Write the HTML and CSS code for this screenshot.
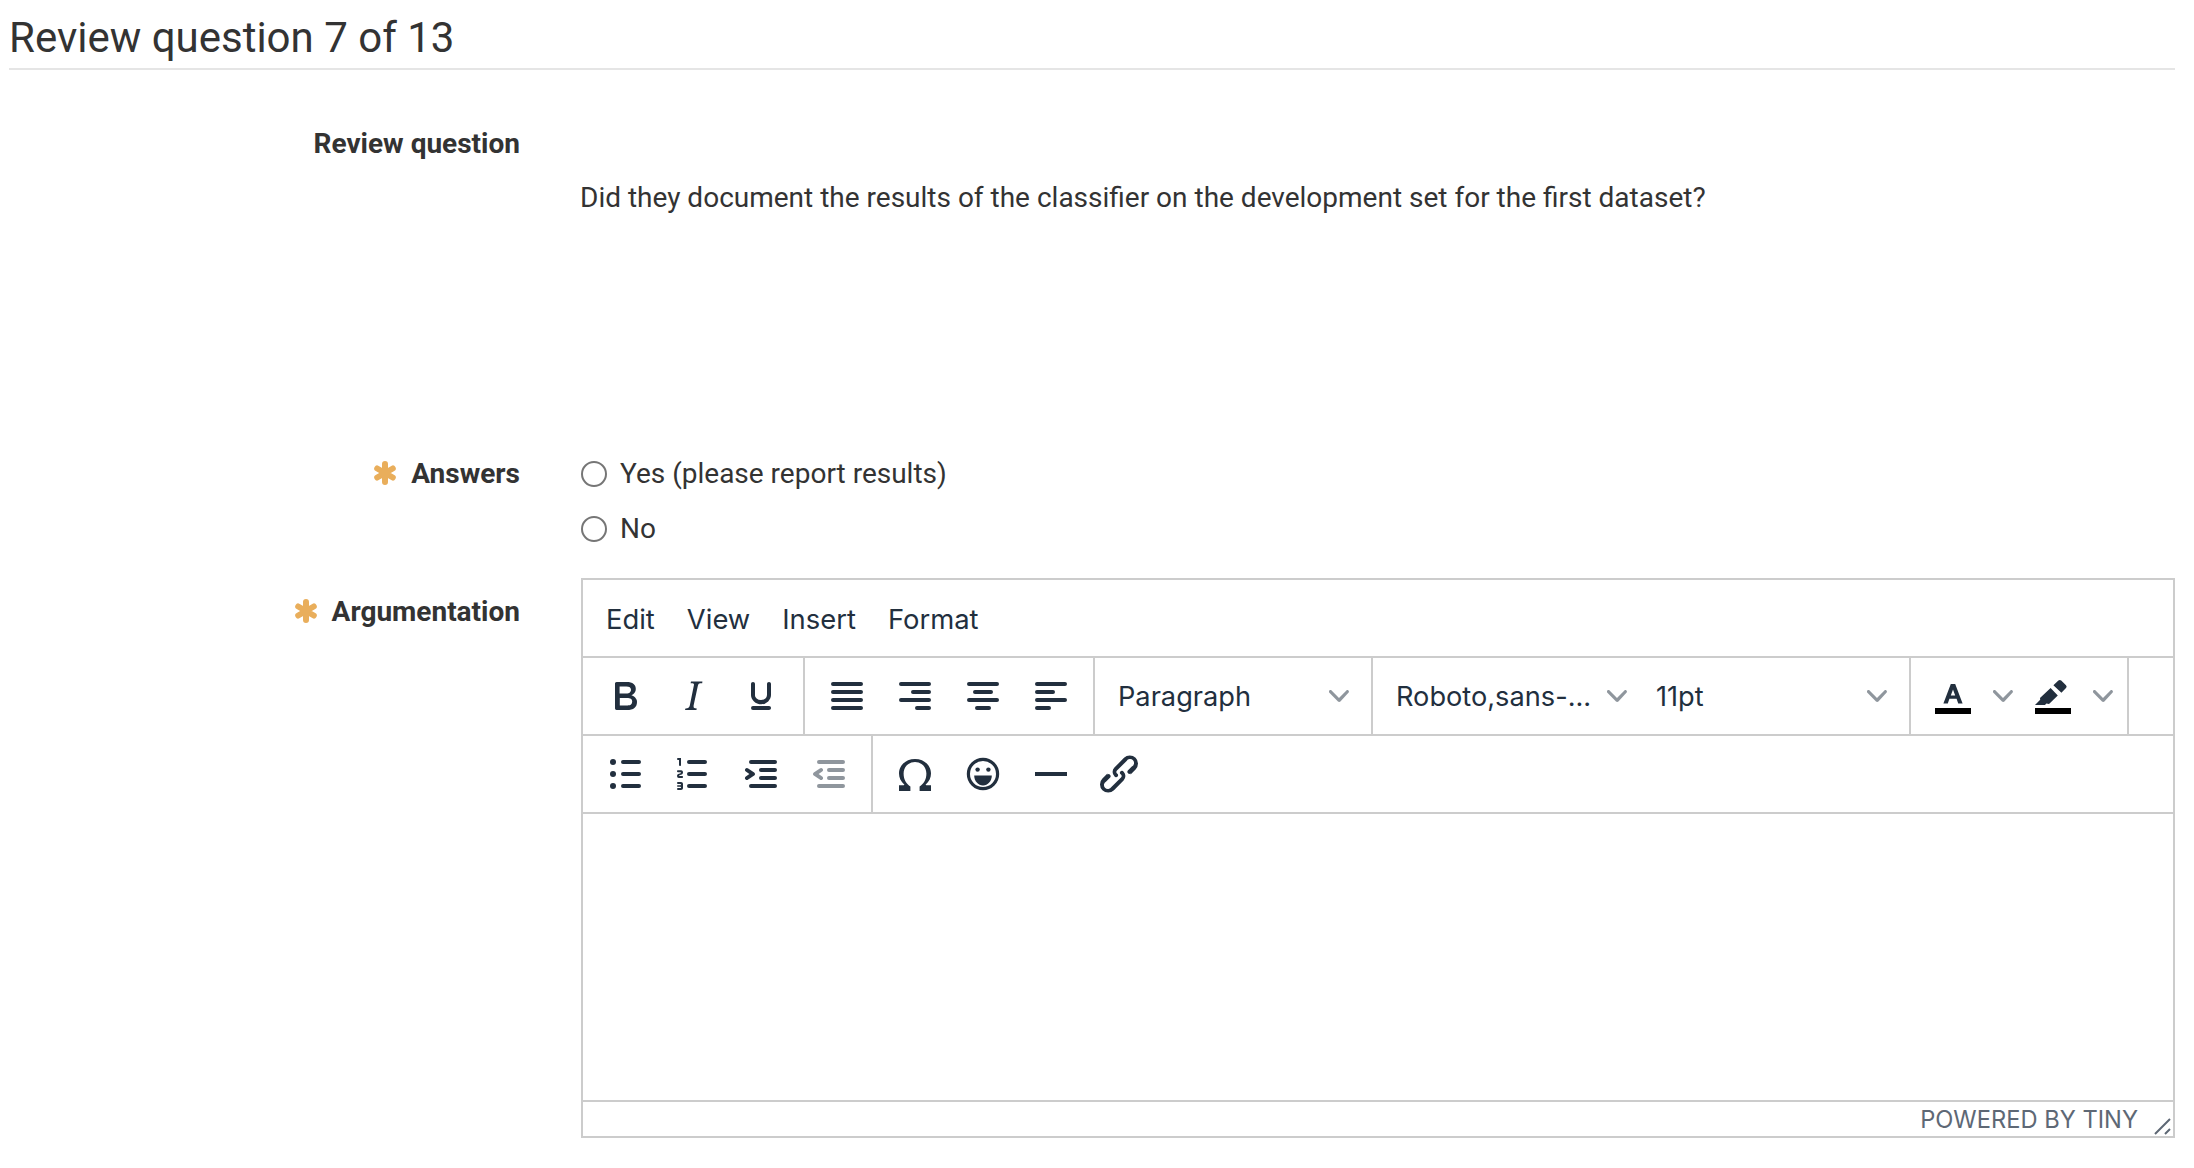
FILE: index.html
```html
<!DOCTYPE html>
<html lang="en">
<head>
    <meta charset="UTF-8">
    <meta name="viewport" content="width=device-width, initial-scale=1.0">
    <title>Review question 7 of 13</title>
    <link rel="stylesheet" href="styles.css">
</head>
<body>
    <svg class="defs" width="0" height="0">
        <symbol id="chevron" viewBox="0 0 10 10"><path d="M8.7 2.2c.3-.3.8-.3 1 0 .4.4.4.9 0 1.2L5.7 7.8c-.3.3-.9.3-1.2 0L.2 3.4a.8.8 0 0 1 0-1.2c.3-.3.8-.3 1.1 0L5 6l3.7-3.8z"/></symbol>
        <symbol id="required" viewBox="0 0 24 24"><path d="M12 3v18M4.200 7.500l15.600 9M19.800 7.500l-15.600 9"/></symbol>
    </svg>

    <h1 class="page-title">Review question 7 of 13</h1>

    <div class="form-row question-row">
        <div class="form-label">Review question</div>
        <div class="question-text">Did they document the results of the classifier on the development set for the first dataset?</div>
    </div>

    <div class="form-row answers-row">
        <div class="form-label"><svg class="required"><use href="#required"/></svg>Answers</div>
        <div class="answers">
            <label class="answer"><input type="radio" name="answer">Yes (please report results)</label>
            <label class="answer"><input type="radio" name="answer">No</label>
        </div>
    </div>

    <div class="form-row">
        <div class="form-label argument-label"><svg class="required"><use href="#required"/></svg>Argumentation</div>
        <div class="editor">
            <div class="menubar">
                <button class="menu-btn">Edit</button>
                <button class="menu-btn">View</button>
                <button class="menu-btn">Insert</button>
                <button class="menu-btn">Format</button>
            </div>

            <div class="toolbar">
                <div class="tool-group">
                    <button class="tool-btn"><svg viewBox="0 0 24 24"><path d="M7.8 19c-.3 0-.5 0-.6-.2l-.2-.5V5.700c0-.2 0-.4.2-.5l.6-.2h5c1.500 0 2.700.3 3.500 1 .7.6 1.100 1.400 1.100 2.500a3 3 0 0 1-.6 1.900c-.4.6-1 1-1.600 1.200.4.1.9.3 1.300.6s.8.7 1 1.200c.4.4.5 1 .5 1.600 0 1.300-.4 2.300-1.300 3-.8.7-2.100 1-3.800 1H7.800zm5-8.300c.6 0 1.200-.1 1.600-.5.4-.3.6-.7.6-1.300 0-1.100-.8-1.700-2.300-1.700H9.300v3.500h3.400zm.5 6c.7 0 1.300-.1 1.700-.4.4-.4.6-.9.6-1.500s-.2-1-.7-1.400c-.4-.3-1-.4-2-.4H9.400v3.800h4z"/></svg></button>
                    <button class="tool-btn"><svg viewBox="0 0 24 24"><path d="M16.700 4.700l-.1.9h-.3c-.6 0-1 0-1.400.3-.3.3-.4.6-.5 1.100l-2.100 9.800v.6c0 .5.4.8 1.400.8h.2l-.2.8H8l.2-.8h.2c1.100 0 1.800-.5 2-1.500l2-9.800.1-.5c0-.6-.4-.8-1.400-.8h-.3l.2-.9h5.800z"/></svg></button>
                    <button class="tool-btn"><svg viewBox="0 0 24 24"><path d="M16 5c.6 0 1 .4 1 1v5.500a4 4 0 0 1-.4 1.800l-1 1.400a5.300 5.300 0 0 1-5.500 1 5 5 0 0 1-1.600-1c-.5-.4-.8-.9-1.100-1.400a4 4 0 0 1-.4-1.800V6c0-.6.4-1 1-1s1 .4 1 1v5.500c0 .3 0 .6.2 1l.6.7a3.300 3.300 0 0 0 2.200.8 3.400 3.400 0 0 0 2.200-.8c.3-.2.4-.5.6-.8l.2-.9V6c0-.6.4-1 1-1zM8 17h8c.6 0 1 .4 1 1s-.4 1-1 1H8a1 1 0 0 1 0-2z"/></svg></button>
                </div>
                <div class="tool-group">
                    <button class="tool-btn"><svg viewBox="0 0 24 24"><path d="M5 5h14a1 1 0 0 1 0 2H5a1 1 0 1 1 0-2zm0 4h14a1 1 0 0 1 0 2H5a1 1 0 1 1 0-2zm0 4h14a1 1 0 0 1 0 2H5a1 1 0 0 1 0-2zm0 4h14a1 1 0 0 1 0 2H5a1 1 0 0 1 0-2z"/></svg></button>
                    <button class="tool-btn"><svg viewBox="0 0 24 24"><path d="M5 5h14a1 1 0 0 1 0 2H5a1 1 0 1 1 0-2zm6 4h8a1 1 0 0 1 0 2h-8a1 1 0 0 1 0-2zm-6 4h14a1 1 0 0 1 0 2H5a1 1 0 0 1 0-2zm8 4h6a1 1 0 0 1 0 2h-6a1 1 0 0 1 0-2z"/></svg></button>
                    <button class="tool-btn"><svg viewBox="0 0 24 24"><path d="M5 5h14a1 1 0 0 1 0 2H5a1 1 0 1 1 0-2zm3 4h8a1 1 0 0 1 0 2H8a1 1 0 1 1 0-2zm-3 4h14a1 1 0 0 1 0 2H5a1 1 0 0 1 0-2zm4 4h6a1 1 0 0 1 0 2H9a1 1 0 0 1 0-2z"/></svg></button>
                    <button class="tool-btn"><svg viewBox="0 0 24 24"><path d="M5 5h14a1 1 0 0 1 0 2H5a1 1 0 1 1 0-2zm0 4h8a1 1 0 0 1 0 2H5a1 1 0 1 1 0-2zm0 4h14a1 1 0 0 1 0 2H5a1 1 0 0 1 0-2zm0 4h6a1 1 0 0 1 0 2H5a1 1 0 0 1 0-2z"/></svg></button>
                </div>
                <div class="tool-group">
                    <button class="select-btn"><span>Paragraph</span><svg class="chevron"><use href="#chevron"/></svg></button>
                </div>
                <div class="tool-group">
                    <button class="select-btn"><span>Roboto,sans-...</span><svg class="chevron"><use href="#chevron"/></svg></button>
                    <button class="select-btn"><span>11pt</span><svg class="chevron"><use href="#chevron"/></svg></button>
                </div>
                <div class="tool-group">
                    <button class="tool-btn"><svg viewBox="0 0 24 24"><path class="swatch" d="M3 18h18v3H3z"/><path fill-rule="evenodd" d="M10.900 6h2.200l3.700 9.700h-2.200l-.8-2.300h-3.600l-.8 2.300H7.200L10.900 6zm1.100 2.800l-1.100 3h2.200l-1.100-3z"/></svg></button>
                    <button class="chevron-btn"><svg class="chevron"><use href="#chevron"/></svg></button>
                    <button class="tool-btn"><svg viewBox="0 0 24 24"><path class="swatch" d="M3 18h18v3H3z"/><path d="M12.200 6.600l2.500-2.300a1 1 0 0 1 1.400 0l2.400 2.300a1 1 0 0 1 0 1.400l-2.300 2.400zM10.800 8l3.600 3.700-4.400 4.300-1.300-.2-.7.700H3l2.600-2.600-.1-.9z"/></svg></button>
                    <button class="chevron-btn"><svg class="chevron"><use href="#chevron"/></svg></button>
                </div>
            </div>

            <div class="toolbar">
                <div class="tool-group">
                    <button class="tool-btn"><svg viewBox="0 0 24 24"><path d="M11 5h8a1 1 0 0 1 0 2h-8a1 1 0 0 1 0-2zm0 6h8a1 1 0 0 1 0 2h-8a1 1 0 0 1 0-2zm0 6h8a1 1 0 0 1 0 2h-8a1 1 0 0 1 0-2z"/><circle cx="6" cy="6" r="1.500"/><circle cx="6" cy="12" r="1.500"/><circle cx="6" cy="18" r="1.500"/></svg></button>
                    <button class="tool-btn"><svg viewBox="0 0 24 24"><path d="M10 17h8a1 1 0 0 1 0 2h-8a1 1 0 0 1 0-2zm0-6h8a1 1 0 0 1 0 2h-8a1 1 0 0 1 0-2zm0-6h8a1 1 0 0 1 0 2h-8a1 1 0 1 1 0-2zM6 4v3.500c0 .3-.2.5-.5.5a.5.5 0 0 1-.5-.5V5h-.5a.5.5 0 0 1 0-1H6zm-1 8.800l.2.2h1.300c.3 0 .5.2.5.5s-.2.5-.5.5H4.900a1 1 0 0 1-.9-1V13c0-.4.3-.8.6-1l1.200-.4.2-.3a.2.2 0 0 0-.2-.2H4.500a.5.5 0 0 1-.5-.5c0-.3.2-.5.5-.5h1.600c.5 0 .9.4.9 1v.1c0 .4-.3.8-.6 1l-1.200.4-.2.3zM7 17v2c0 .6-.4 1-1 1H4.500a.5.5 0 0 1 0-1h1.200c.2 0 .3-.1.3-.3 0-.2-.1-.3-.3-.3H4.400a.4.4 0 1 1 0-.8h1.300c.2 0 .3-.1.3-.3 0-.2-.1-.3-.3-.3H4.500a.5.5 0 1 1 0-1H6c.6 0 1 .4 1 1z"/></svg></button>
                    <button class="tool-btn"><svg viewBox="0 0 24 24"><path d="M7 5h12a1 1 0 0 1 0 2H7a1 1 0 1 1 0-2zm5 4h7a1 1 0 0 1 0 2h-7a1 1 0 0 1 0-2zm0 4h7a1 1 0 0 1 0 2h-7a1 1 0 0 1 0-2zm-5 4h12a1 1 0 0 1 0 2H7a1 1 0 0 1 0-2zm-2.600-3.800L6.200 12l-1.800-1.200a1 1 0 0 1 1.200-1.600l3 2a1 1 0 0 1 0 1.600l-3 2a1 1 0 1 1-1.200-1.600z"/></svg></button>
                    <button class="tool-btn disabled"><svg viewBox="0 0 24 24"><path d="M7 5h12a1 1 0 0 1 0 2H7a1 1 0 1 1 0-2zm5 4h7a1 1 0 0 1 0 2h-7a1 1 0 0 1 0-2zm0 4h7a1 1 0 0 1 0 2h-7a1 1 0 0 1 0-2zm-5 4h12a1 1 0 0 1 0 2H7a1 1 0 0 1 0-2zm1.600-3.800a1 1 0 0 1-1.200 1.600l-3-2a1 1 0 0 1 0-1.600l3-2a1 1 0 0 1 1.200 1.600L6.800 12l1.800 1.200z"/></svg></button>
                </div>
                <div class="tool-group last-group">
                    <button class="tool-btn"><svg viewBox="0 0 24 24"><path d="M4 20.500v-2.900h2.300c.4 0 .5-.2.3-.4C4.900 15.700 4 13.800 4 11.700 4 7.600 7.500 4.500 12 4.500s8 3.100 8 7.200c0 2.100-.9 4-2.600 5.500-.2.2-.1.4.3.4H20v2.900h-5.700v-2.300c1.900-1 3.400-3.200 3.400-6.400 0-3.300-2.400-5.800-5.700-5.800S6.300 8.500 6.300 11.800c0 3.200 1.500 5.400 3.400 6.400v2.300H4z"/></svg></button>
                    <button class="tool-btn"><svg viewBox="0 0 24 24"><circle class="line" cx="12" cy="12" r="7.300"/><circle cx="9.300" cy="9.800" r="1.100"/><circle cx="14.700" cy="9.800" r="1.100"/><path d="M7.600 12.700h8.800c0 2.800-2 5-4.400 5s-4.400-2.200-4.400-5z"/></svg></button>
                    <button class="tool-btn"><svg viewBox="0 0 24 24"><path d="M4 11h16v2H4z"/></svg></button>
                    <button class="tool-btn"><svg viewBox="0 0 24 24"><path d="M6.200 12.300a1 1 0 0 1 1.400 1.400l-2 2a2 2 0 1 0 2.600 2.800l4.800-4.800a1 1 0 0 0 0-1.400 1 1 0 1 1 1.300-1.400 3 3 0 0 1 0 4.300l-4.800 4.900a4 4 0 0 1-5.800-5.800l2.500-2.500zm11.600-.6a1 1 0 0 1-1.400-1.400l2-2a2 2 0 1 0-2.600-2.800l-4.800 4.800a1 1 0 0 0 0 1.400 1 1 0 1 1-1.300 1.400 3 3 0 0 1 0-4.300l4.800-4.900a4 4 0 0 1 5.800 5.800l-2.500 2.500z"/></svg></button>
                </div>
            </div>

            <div class="edit-area"></div>

            <div class="statusbar">
                <span class="branding">Powered by Tiny</span>
                <svg class="resize-handle" viewBox="0 0 20 18"><path d="M2 17L17 2M12 17l5-5"/></svg>
            </div>
        </div>
    </div>
</body>
</html>
```

FILE: styles.css
```css
* {
    box-sizing: border-box;
}
html, body {
    height: 100%;
}
body {
    margin: 0;
    padding: 0 19px 0 9px;
    font-family: Roboto, sans-serif;
    color: #333;
    background: #fff;
    overflow: hidden;
}
.defs {
    position: absolute;
}
.page-title {
    margin: 0;
    height: 70px;
    padding-top: 13px;
    font-size: 42px;
    line-height: 50px;
    font-weight: 400;
    border-bottom: 2px solid #e5e5e5;
}
.form-row {
    display: flex;
}
.form-label {
    width: 511px;
    flex: none;
    display: flex;
    justify-content: flex-end;
    align-items: center;
    gap: 14px;
    height: 36px;
    font-size: 28px;
    font-weight: 700;
}
.question-row {
    height: 388px;
    padding-top: 55px;
}
.question-text {
    margin-left: 60px;
    padding-top: 55px;
    font-size: 28px;
    line-height: 36px;
}
.answers-row {
    height: 120px;
}
.answers-row .form-label {
    margin-top: -3px;
}
.answers {
    margin-left: 60px;
    margin-top: -3px;
    display: flex;
    flex-direction: column;
    gap: 19px;
}
.answer {
    display: flex;
    align-items: center;
    gap: 13px;
    height: 36px;
    font-size: 28px;
}
.answer input {
    appearance: none;
    width: 26px;
    height: 26px;
    margin: 0 0 -2px 1px;
    border: 2px solid #767676;
    border-radius: 50%;
    background: #fff;
}
.required {
    width: 24px;
    height: 24px;
    fill: none;
    stroke: #e9ae5b;
    stroke-width: 6;
    stroke-linecap: round;
}
.argument-label {
    margin-top: 15px;
}
.editor {
    margin-left: 61px;
    flex: 1;
    height: 560px;
    border: 2px solid #ccc;
    display: flex;
    flex-direction: column;
    font-family: Inter, sans-serif;
    color: #222f3e;
}
.menubar {
    height: 78px;
    padding: 2px 8px 0 7px;
    display: flex;
    align-items: center;
    border-bottom: 2px solid #ccc;
}
.editor button {
    border: 0;
    background: none;
    padding: 0;
    font: inherit;
    color: inherit;
    display: flex;
    align-items: center;
}
.menu-btn {
    height: 68px;
    padding: 0 16px !important;
    font-size: 27.4px !important;
}
.toolbar {
    height: 78px;
    display: flex;
    border-bottom: 2px solid #ccc;
}
.tool-group {
    display: flex;
    align-items: center;
    padding: 0 8px;
    border-right: 2px solid #ccc;
}
.last-group {
    border-right: 0;
}
.tool-btn {
    width: 68px;
    height: 68px;
    justify-content: center;
}
.tool-btn svg {
    width: 48px;
    height: 48px;
    fill: #222f3e;
}
.tool-btn .swatch {
    fill: #000;
}
.tool-btn .line {
    fill: none;
    stroke: #222f3e;
    stroke-width: 1.6;
}
.tool-btn.disabled svg {
    opacity: .5;
}
.select-btn {
    width: 260px;
    height: 68px;
    padding: 0 14px 0 15px !important;
    justify-content: space-between;
    font-size: 27.2px !important;
    font-variant-numeric: tabular-nums;
}
.chevron-btn {
    width: 32px;
    height: 68px;
    justify-content: center;
}
.chevron {
    width: 20px;
    height: 20px;
    fill: #222f3e;
    opacity: .5;
}
.edit-area {
    flex: 1;
}
.statusbar {
    height: 36px;
    border-top: 2px solid #ccc;
    display: flex;
    justify-content: flex-end;
    align-items: center;
    position: relative;
    padding-right: 35px;
}
.branding {
    font-size: 23.7px;
    text-transform: uppercase;
    color: #5e6875;
}
.resize-handle {
    position: absolute;
    right: 0;
    bottom: 1px;
    width: 20px;
    height: 18px;
    fill: none;
    stroke: #5e6875;
    stroke-width: 2;
}
```
